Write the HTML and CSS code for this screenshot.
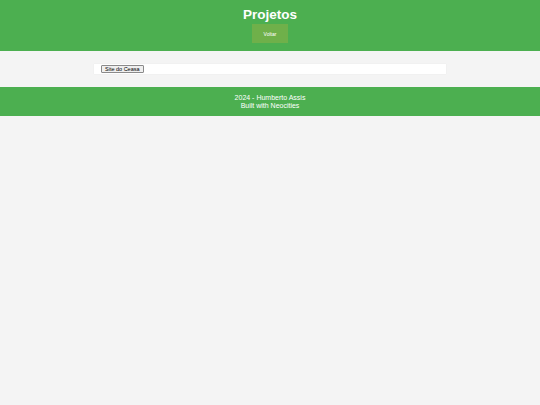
FILE: index.html
```html
<!DOCTYPE html>
<html lang="pt">
<head>
<meta charset="utf-8">
<title>Projetos</title>
<link rel="stylesheet" href="styles.css">
</head>
<body>
<header class="site-header">
  <h1 class="title">Projetos</h1>
  <a class="back-btn" href="#">Voltar</a>
</header>
<main class="content">
  <section class="card">
    <button class="project-btn">Site do Ceasa</button>
  </section>
</main>
<footer class="site-footer">
  <p class="line">2024 - Humberto Assis</p>
  <p class="line">Built with Neocities</p>
</footer>
</body>
</html>
```

FILE: styles.css
```css
html, body {
  margin: 0;
  padding: 0;
  background: #f4f4f4;
  font-family: "Liberation Sans", Arial, sans-serif;
}
.site-header {
  background: #4caf50;
  color: #fff;
  text-align: center;
  height: 51px;
  box-sizing: border-box;
  padding-top: 7px;
  display: flex;
  flex-direction: column;
  align-items: center;
}
.title {
  margin: 0;
  font-size: 13.5px;
  line-height: 16px;
  font-weight: bold;
}
.back-btn {
  display: flex;
  align-items: center;
  justify-content: center;
  margin-top: 1px;
  width: 36px;
  height: 19px;
  background: #6fb04a;
  color: #fff;
  font-size: 5px;
  text-decoration: none;
}
.content {
  padding: 13px 0 13px;
  display: flex;
  justify-content: center;
}
.card {
  width: 352px;
  height: 10px;
  box-sizing: border-box;
  background: #fff;
  box-shadow: 0 0 1px rgba(0,0,0,0.08);
  padding: 1px 7px;
  display: flex;
  align-items: flex-start;
}
.project-btn {
  font-family: "Liberation Sans", Arial, sans-serif;
  font-size: 5.5px;
  line-height: 6px;
  height: 8px;
  padding: 0 3px;
  background: #efefef;
  border: 1px solid #8a8a8a;
  border-radius: 1px;
  color: #000;
}
.site-footer {
  background: #4caf50;
  color: #fff;
  text-align: center;
  height: 29px;
  box-sizing: border-box;
  padding-top: 7px;
}
.line {
  margin: 0;
  font-size: 7px;
  line-height: 8px;
}
```
